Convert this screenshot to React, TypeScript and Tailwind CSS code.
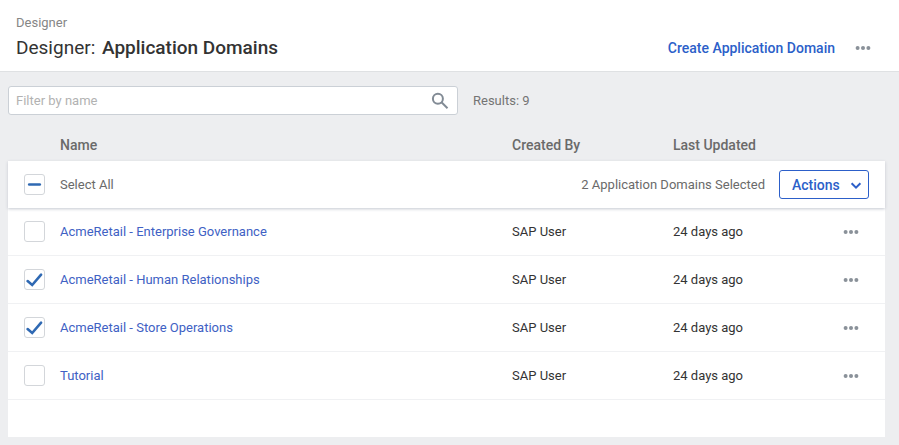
import { useEffect, useRef, useState } from "react";

const domains = [
  { name: "AcmeRetail - Enterprise Governance", createdBy: "SAP User", updated: "24 days ago" },
  { name: "AcmeRetail - Human Relationships", createdBy: "SAP User", updated: "24 days ago" },
  { name: "AcmeRetail - Store Operations", createdBy: "SAP User", updated: "24 days ago" },
  { name: "Tutorial", createdBy: "SAP User", updated: "24 days ago" },
];

function MoreButton({ label }: { label: string }) {
  return (
    <button type="button" aria-label={label} className="flex h-8 w-8 items-center justify-center text-[#8a9199]">
      <svg viewBox="0 0 16 6" className="h-[6px] w-4" fill="currentColor" aria-hidden="true">
        <circle cx="2.6" cy="3" r="2" />
        <circle cx="8" cy="3" r="2" />
        <circle cx="13.4" cy="3" r="2" />
      </svg>
    </button>
  );
}

type CheckboxProps = {
  id: string;
  label?: string;
  checked: boolean;
  mixed?: boolean;
  onChange: () => void;
};

function Checkbox({ id, label, checked, mixed = false, onChange }: CheckboxProps) {
  const ref = useRef<HTMLInputElement>(null);
  useEffect(() => {
    if (ref.current) ref.current.indeterminate = mixed;
  }, [mixed]);
  return (
    <span className="ml-4 grid h-[21px] w-[21px]">
      <input
        ref={ref}
        id={id}
        type="checkbox"
        aria-label={label}
        checked={checked}
        onChange={onChange}
        className="h-[21px] w-[21px] appearance-none rounded-[3px] border border-[#d3d6da] bg-white [grid-area:1/1]"
      />
      {(mixed || checked) && (
        <svg
          viewBox="0 0 21 21"
          className="pointer-events-none h-[21px] w-[21px] [grid-area:1/1]"
          fill="none"
          stroke="#2f69b3"
          strokeWidth="2.6"
          aria-hidden="true"
        >
          {mixed ? <path d="M5.2 10.5h10.6" strokeLinecap="round" /> : <path d="M3.6 12.1l4.6 3.9 8.9-10.3" strokeLinecap="round" />}
        </svg>
      )}
    </span>
  );
}

export default function App() {
  const [selected, setSelected] = useState([false, true, true, false]);
  const count = selected.filter(Boolean).length;
  const all = count === domains.length;

  return (
    <div className="flex min-h-screen flex-col bg-[#edeef0] font-[Roboto,'Liberation_Sans',sans-serif] text-[13px] leading-5 text-[#333]">
      <header className="border-b border-[#dfe1e3] bg-white pt-[13px] pr-5 pb-[8px] pl-4">
        <nav aria-label="Breadcrumb" className="text-[#868686]">
          Designer
        </nav>
        <div className="flex h-[30px] items-center justify-between">
          <h1 className="text-[19px] leading-[30px]">
            Designer: <span className="ml-[2px] font-medium">Application Domains</span>
          </h1>
          <div className="flex items-center gap-3">
            <button type="button" className="text-sm font-medium text-[#2c5fc9]">
              Create Application Domain
            </button>
            <MoreButton label="More options" />
          </div>
        </div>
      </header>

      <main className="flex grow flex-col pt-[14px] pr-[14px] pb-2 pl-2">
        <div className="flex items-center gap-[15px]">
          <div className="flex h-[29px] w-[450px] items-center rounded-[3px] border border-[#cbd0d6] bg-white pr-2 pl-[7px]">
            <input
              type="text"
              aria-label="Filter by name"
              placeholder="Filter by name"
              className="min-w-0 grow bg-transparent outline-none placeholder:text-[#b2b2b2]"
            />
            <svg viewBox="0 0 18 18" className="h-[18px] w-[18px]" fill="none" stroke="#828b95" strokeWidth="2" aria-hidden="true">
              <circle cx="6.9" cy="6.7" r="5" />
              <path d="M10.5 10.3l6 6" />
            </svg>
          </div>
          <p className="text-[#747474]">Results: 9</p>
        </div>

        <div className="mt-[14px] grow bg-[linear-gradient(#edeef0_32px,white_32px)]">
          <table className="w-full table-fixed border-separate border-spacing-0 text-left">
            <colgroup>
              <col className="w-[52px]" />
              <col />
              <col className="w-[161px]" />
              <col className="w-[162px]" />
              <col className="w-[50px]" />
            </colgroup>
            <thead className="text-sm text-[#6a6a6a]">
              <tr className="h-8">
                <td />
                <th scope="col" className="font-medium">Name</th>
                <th scope="col" className="font-medium">Created By</th>
                <th scope="col" className="font-medium">Last Updated</th>
                <td />
              </tr>
            </thead>
            <tbody>
              <tr className="h-[47px] bg-white text-[#6a6a6a] shadow-[0_1px_3px_#c4c8d0]">
                <td>
                  <Checkbox
                    id="select-all"
                    checked={all}
                    mixed={count > 0 && !all}
                    onChange={() => setSelected(domains.map(() => !all))}
                  />
                </td>
                <td colSpan={4}>
                  <div className="flex items-center justify-between pr-4">
                    <label htmlFor="select-all">Select All</label>
                    <div className="flex items-center gap-[14px]">
                      <span>{count} Application Domains Selected</span>
                      <button
                        type="button"
                        className="flex h-[29px] w-[90px] items-center justify-between rounded-[3px] border border-[#2c5fc9] pr-[6px] pl-3 text-sm font-medium text-[#2c5fc9]"
                      >
                        Actions
                        <svg viewBox="0 0 12 12" className="h-3 w-3" fill="none" stroke="currentColor" strokeWidth="2" aria-hidden="true">
                          <path d="M1.6 4.2L6 8.6l4.4-4.4" />
                        </svg>
                      </button>
                    </div>
                  </div>
                </td>
              </tr>
              {domains.map((domain, i) => (
                <tr key={domain.name} className="h-12 *:border-b *:border-[#f0f1f3]">
                  <td>
                    <Checkbox
                      id={`domain-${i}`}
                      label={domain.name}
                      checked={selected[i]}
                      onChange={() => setSelected(selected.map((s, j) => (j === i ? !s : s)))}
                    />
                  </td>
                  <td>
                    <a href="#" className="text-[#4061c4]">{domain.name}</a>
                  </td>
                  <td>{domain.createdBy}</td>
                  <td>{domain.updated}</td>
                  <td>
                    <MoreButton label={`Options for ${domain.name}`} />
                  </td>
                </tr>
              ))}
            </tbody>
          </table>
        </div>
      </main>
    </div>
  );
}
